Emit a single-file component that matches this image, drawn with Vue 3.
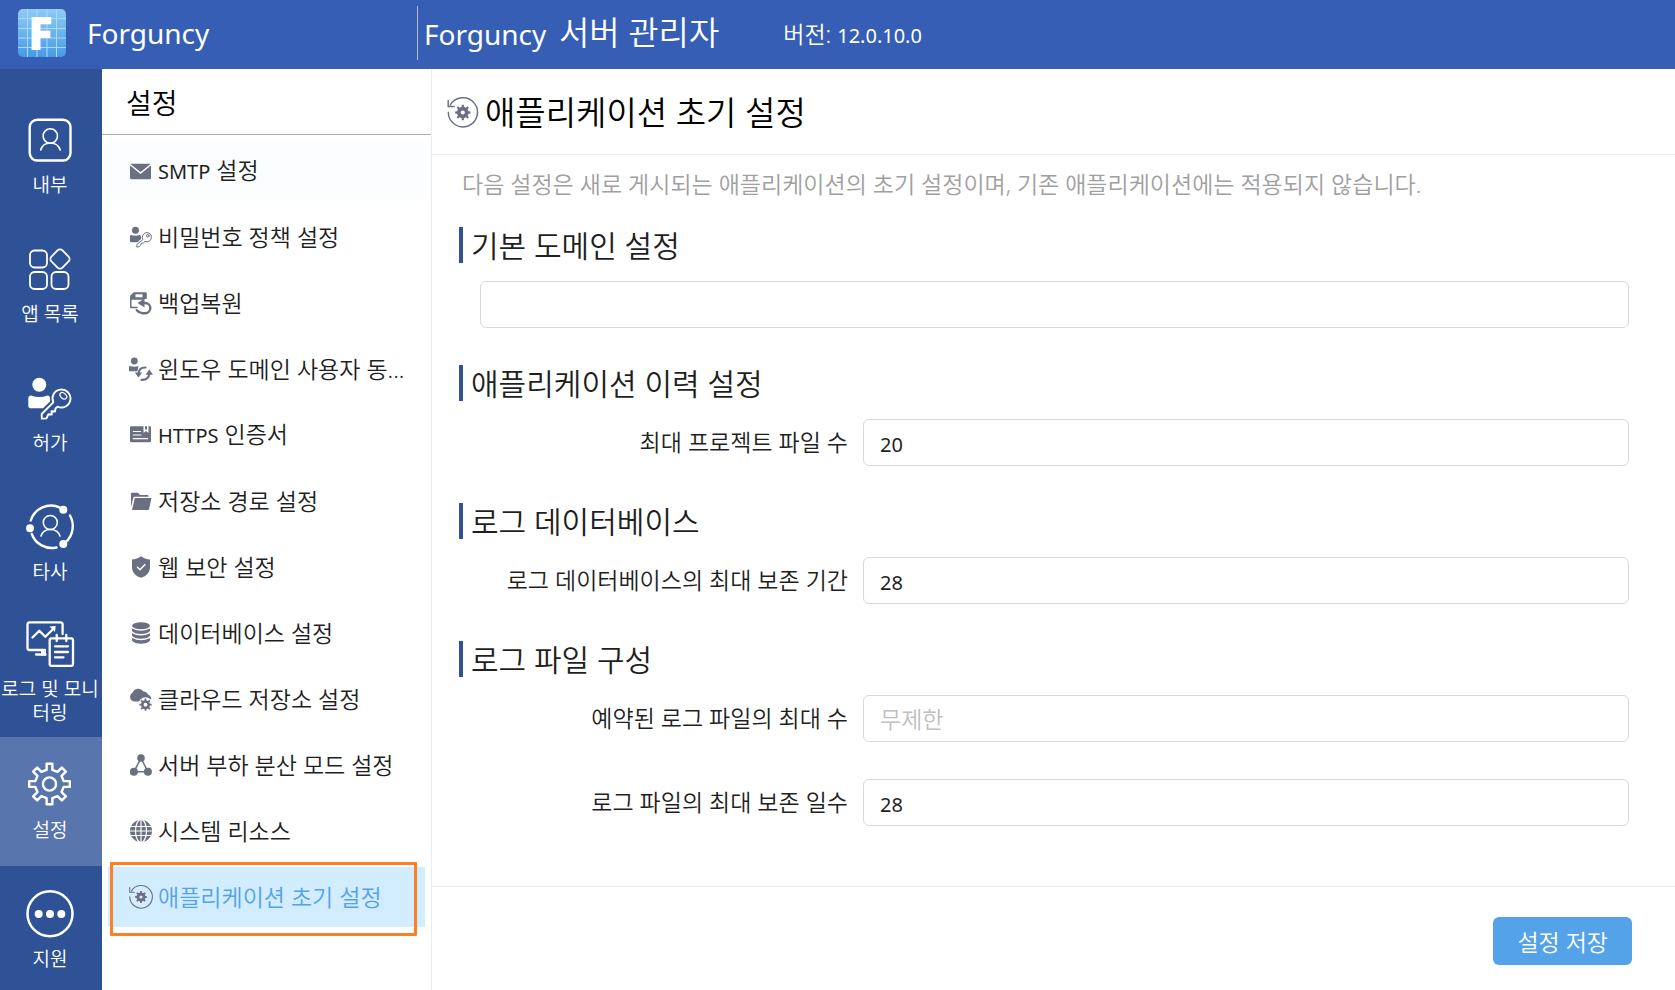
<template>
  <div class="layout">
    <header class="topbar">
      <div class="brand">
        <svg class="brand-logo" viewBox="0 0 48 48" aria-hidden="true">
          <defs>
            <linearGradient id="logoBg" x1="0" y1="0" x2="0" y2="1">
              <stop offset="0" stop-color="#90cbf3" />
              <stop offset="1" stop-color="#479ae8" />
            </linearGradient>
          </defs>
          <rect width="48" height="48" rx="5" fill="url(#logoBg)" />
          <path
            d="M9.5 0V48M19 0V48M29 0V48M38.5 0V48M0 9.5H48M0 19.5H48M0 29H48M0 38.5H48"
            stroke="#a9dcfa"
            stroke-width="1"
          />
          <text x="10" y="41" class="logo-mark">F</text>
        </svg>
        <span class="brand-name">Forguncy</span>
      </div>
      <h1 class="product"><span class="latin">Forguncy</span> 서버 관리자</h1>
      <span class="version">버전: <span class="latin">12.0.10.0</span></span>
    </header>

    <div class="body">
      <!-- Main navigation -->
      <nav class="sidebar">
        <a
          v-for="item in navItems"
          :key="item.label"
          href="#"
          :class="['sidebar-link', { active: activeNav === item.label }]"
          @click.prevent="activeNav = item.label"
        >
          <svg class="sidebar-icon" viewBox="0 0 48 48" aria-hidden="true" v-html="item.icon"></svg>
          <span class="sidebar-label">{{ item.label }}</span>
        </a>
      </nav>

      <!-- Settings menu -->
      <aside class="menu">
        <h2 class="menu-title">설정</h2>
        <ul class="menu-list">
          <li
            v-for="item in menuItems"
            :key="item.label"
            :class="['menu-item', { active: activeMenu === item.label }]"
          >
            <a href="#" class="menu-link" @click.prevent="activeMenu = item.label">
              <svg class="menu-icon" viewBox="0 0 24 24" aria-hidden="true" v-html="item.icon"></svg>
              <span class="menu-label">
                <span v-if="item.latin" class="latin">{{ item.latin }}</span>
                {{ item.label }}
              </span>
            </a>
          </li>
        </ul>
      </aside>

      <main class="content">
        <div class="content-header">
          <svg class="content-icon" viewBox="0 0 24 24" aria-hidden="true" v-html="restoreIcon"></svg>
          <h2 class="content-title">애플리케이션 초기 설정</h2>
        </div>

        <form id="settings" class="form" @submit.prevent>
          <p class="description">
            다음 설정은 새로 게시되는 애플리케이션의 초기 설정이며, 기존 애플리케이션에는 적용되지 않습니다.
          </p>

          <section v-for="section in sections" :key="section.title" class="section">
            <h3 class="section-title">{{ section.title }}</h3>
            <div
              v-for="field in section.fields"
              :key="field.id"
              :class="['field', { wide: !field.label }]"
            >
              <label v-if="field.label" :for="field.id" class="field-label">{{ field.label }}</label>
              <input
                :id="field.id"
                v-model="field.value"
                type="text"
                class="field-input"
                :placeholder="field.placeholder"
                :aria-label="field.label ? null : section.title"
              />
            </div>
          </section>
        </form>

        <footer class="content-footer">
          <button type="submit" form="settings" class="save-button">설정 저장</button>
        </footer>
      </main>
    </div>
  </div>
</template>

<script setup>
import { ref, reactive } from "vue";

// Closed outline of a cog with flat teeth
const gear = (cx, cy, outer, inner, teeth = 8) => {
  const step = (Math.PI * 2) / teeth;
  const points = [];
  for (let i = 0; i < teeth; i++) {
    const a = i * step - Math.PI / 2;
    [
      [inner, -0.25],
      [outer, -0.18],
      [outer, 0.18],
      [inner, 0.25],
    ].forEach(([r, offset]) => {
      const angle = a + offset * step;
      points.push(`${(cx + r * Math.cos(angle)).toFixed(2)} ${(cy + r * Math.sin(angle)).toFixed(2)}`);
    });
  }
  return `M${points.join("L")}Z`;
};

const hole = (cx, cy, r) => `M${cx - r} ${cy}a${r} ${r} 0 1 0 ${r * 2} 0a${r} ${r} 0 1 0 ${-r * 2} 0Z`;

const line = (width, body) =>
  `<g fill="none" stroke="currentColor" stroke-width="${width}" stroke-linecap="round" stroke-linejoin="round">${body}</g>`;
const solid = (body) => `<g fill="currentColor" fill-rule="evenodd">${body}</g>`;

const restoreIcon =
  line(1.1, '<path d="M3.3 6.2A11.3 11.3 0 1 1 1.8 11.8"/><path d="M1.7 2.6V7.3H6.3"/>') +
  solid(`<path d="${gear(13, 12, 6, 4.5)}${hole(13, 12, 1.6)}"/>`);

const navItems = [
  {
    label: "내부",
    icon:
      line(2.4, '<rect x="2.7" y="3.7" width="40.8" height="40.8" rx="7.5"/>') +
      line(1.6, '<circle cx="23.3" cy="20" r="7.2"/><path d="M13.7 34C15 29.5 18.5 27 23.3 27S31.8 29.5 33.2 34"/>'),
  },
  {
    label: "앱 목록",
    icon: line(
      1.8,
      '<rect x="3" y="5.5" width="17" height="17" rx="4.5"/><rect x="3" y="27" width="17" height="17" rx="4.5"/><rect x="24.5" y="27" width="17" height="17" rx="4.5"/><rect x="25.2" y="6.2" width="15.6" height="15.6" rx="3.5" transform="rotate(45 33 14)"/>'
    ),
  },
  {
    label: "허가",
    icon:
      solid(
        '<circle cx="12.3" cy="10.7" r="7"/><path d="M4 21.5c5.5 2 11 2 16.5 0 1.5 0 2.5 1 2.5 2.5v3.5l-7 6.8H3.5c-1.3 0-2.2-.9-2.2-2.2V24c0-1.5 1.2-2.5 2.7-2.5Z"/>'
      ) +
      line(
        1.9,
        '<path d="M26.3 28.3A9 9 0 1 1 30.5 32.6L28.5 34.5 28 37.5 24.5 37.2 24.8 40.5 21.3 40.3 19.5 44.4 14.8 44.6 14.7 40Z"/><ellipse cx="36.3" cy="21.8" rx="3.8" ry="2.6" transform="rotate(42 36.3 21.8)" stroke-width="1.3"/>'
      ),
  },
  {
    label: "타사",
    icon:
      line(
        2.4,
        '<path d="M3.7 17.5A21.3 21.3 0 0 1 33 4.6"/><path d="M43 12.5A21.8 21.8 0 0 1 38.5 39.4"/><path d="M4.8 31A21.3 21.3 0 0 0 29.5 44.5"/>'
      ) +
      line(1.6, '<circle cx="23.3" cy="19.5" r="7"/><path d="M14 33C15.5 28.7 18.7 26.5 23.3 26.5S31.5 28.7 33 33"/>') +
      solid('<circle cx="36.3" cy="6.7" r="4"/><circle cx="3" cy="25.3" r="4"/><circle cx="36.3" cy="41" r="4"/>'),
  },
  {
    label: "로그 및 모니터링",
    icon:
      line(
        2.3,
        '<path d="M18 30H2.7C1.3 30 .5 29.2 .5 28V4.5C.5 3 1.3 2.3 2.7 2.3H33.5C35 2.3 35.6 3 35.6 4.5V14"/><path d="M9 34.5H18.5"/><path d="M5.5 17.5L12.3 10.7 18.3 16.8 26.5 8.7"/><rect x="22.7" y="18.3" width="23.3" height="27.5" rx="1.8"/><path d="M29.7 15V21M39.3 15V21M28 26.3H41M28 32H41M28 37.3H36.5"/>'
      ) + solid('<path d="M22.5 6.5L28.7 6 28 12Z"/><path d="M14 29H19V35.5H14Z"/>'),
  },
  {
    label: "설정",
    icon: line(2.4, `<path d="${gear(22.5, 23, 20.5, 14.5)}"/><circle cx="22.5" cy="23" r="6.6"/>`),
  },
  {
    label: "지원",
    icon:
      line(2.5, '<circle cx="23" cy="23.7" r="22.5"/>') +
      solid('<circle cx="11.7" cy="24" r="4"/><circle cx="23" cy="24" r="4"/><circle cx="34.3" cy="24" r="4"/>'),
  },
];

const menuItems = [
  {
    latin: "SMTP",
    label: "설정",
    icon:
      solid('<rect x="2" y="4.7" width="21" height="15.5" rx="1.5"/>') +
      '<path d="M2 5.5L12.5 14 23 5.5" fill="none" stroke="#fff" stroke-width="1.5"/>',
  },
  {
    label: "비밀번호 정책 설정",
    icon:
      solid('<circle cx="7.5" cy="5.3" r="3.5"/><path d="M3 10C6 11 9 11 12 10L13 11.5V14L9.5 17.2H3Q2 17.2 2 16V11Q2 10 3 10Z"/>') +
      line(
        1,
        '<path d="M14.7 14.2A4.6 4.6 0 1 1 17 16.4L15.3 18 13.5 18.2 12.5 20.5 11 21.8 8.8 22 8.8 20Z"/><circle cx="19.8" cy="10.8" r="1.3"/>'
      ),
  },
  {
    label: "백업복원",
    icon:
      line(1.5, '<path d="M9 16.5H2.8V5L6 2.2H17.8V7"/>') +
      solid('<path d="M5.5 1.5H18.5V8H16L15 8.8H3V4.5ZM7.5 3.3V6.3H14.5V3.3Z"/><path d="M9.5 12L16.5 7.5V16.5Z"/>') +
      line(2.4, '<path d="M15.5 12H17.2A5.1 5.1 0 0 1 17.2 22.2H14.5Q11 22 8.8 19.2"/>'),
  },
  {
    label: "윈도우 도메인 사용자 동...",
    icon:
      solid(
        '<circle cx="6.3" cy="4" r="3.4"/><path d="M2 9C5 10 8 10 10.5 9L9.5 14.3H1V10Q1 9 2 9Z"/><path d="M6.8 15.5L10.5 20.5 14.2 15.5Z"/><path d="M17.5 17.8L21.3 12.5 25 17.8Z"/>'
      ) + line(2.2, '<path d="M10.5 16.5Q11 10.3 17.5 10.5"/><path d="M21.3 17Q20.8 23 13.5 22.8"/>'),
  },
  {
    latin: "HTTPS",
    label: "인증서",
    icon:
      solid('<path d="M3 3.3H15.5V10L18 8 20.5 10V3.3H22Q23 3.3 23 4.3V18Q23 19.2 22 19.2H3Q2 19.2 2 18V4.3Q2 3.3 3 3.3Z"/><path d="M17 3.3H19V7L18 6.2 17 7Z"/>') +
      '<path d="M4.8 8.5H13M4.8 12H13.5M4.8 15.7H20" stroke="#fff" stroke-width="1.2"/>',
  },
  {
    label: "저장소 경로 설정",
    icon: solid(
      '<path d="M3 4.5Q3 3.7 4 3.7H10L12 6H19.5Q20.5 6 20.5 7V7.8H6.5Q5.5 7.8 5.2 9L3 18Z"/><path d="M6.8 9H23.5L21 20.2Q20.8 21 20 21H4Z"/>'
    ),
  },
  {
    label: "웹 보안 설정",
    icon:
      solid('<path d="M13 1.3C15.5 3.2 18.5 4.3 22 4.5V12C22 17.5 18.5 21 13 22.8 7.5 21 4 17.5 4 12V4.5C7.5 4.3 10.5 3.2 13 1.3Z"/>') +
      '<path d="M9 11.8L12 14.7 17.3 9.3" fill="none" stroke="#fff" stroke-width="1.5"/>',
  },
  {
    label: "데이터베이스 설정",
    icon: solid(
      '<ellipse cx="13" cy="4.8" rx="9" ry="3.5"/><path d="M4 7.5Q13 12 22 7.5V10Q19.5 13 13 13T4 10Z"/><path d="M4 12.3Q13 16.8 22 12.3V14.8Q19.5 17.7 13 17.7T4 14.8Z"/><path d="M4 17Q13 21.5 22 17V19.5Q19.5 22.7 13 22.7T4 19.5Z"/>'
    ),
  },
  {
    label: "클라우드 저장소 설정",
    icon:
      solid('<path d="M6 14.5A4.7 4.7 0 0 1 4.5 5.8 6.2 6.2 0 0 1 15.5 4.5 5 5 0 0 1 20 7.5Q23 8.5 23.3 12L20 14.5Z"/>') +
      '<circle cx="17.5" cy="17.5" r="7.2" fill="#fff"/>' +
      solid(`<path d="${gear(17.5, 17.7, 6.2, 4.6)}${hole(17.5, 17.7, 1.9)}"/>`),
  },
  {
    label: "서버 부하 분산 모드 설정",
    icon:
      line(1.5, '<path d="M13 5L6 18.7H19.8Z"/>') +
      solid('<circle cx="13" cy="5" r="3.8"/><circle cx="5.9" cy="18.7" r="4"/><circle cx="19.9" cy="18.7" r="4"/>'),
  },
  {
    label: "시스템 리소스",
    icon:
      solid('<circle cx="13" cy="12" r="11"/>') +
      '<g fill="none" stroke="#fff" stroke-width="1.2"><ellipse cx="13" cy="12" rx="5.5" ry="11.5"/><path d="M13 1V23M2 12H24M3 7.5H23M3 16.5H23"/></g>',
  },
  { label: "애플리케이션 초기 설정", icon: restoreIcon },
];

const activeNav = ref("설정");
const activeMenu = ref("애플리케이션 초기 설정");

const sections = reactive([
  { title: "기본 도메인 설정", fields: [{ id: "domain", value: "" }] },
  {
    title: "애플리케이션 이력 설정",
    fields: [{ id: "max-projects", label: "최대 프로젝트 파일 수", value: "20" }],
  },
  {
    title: "로그 데이터베이스",
    fields: [{ id: "db-retention", label: "로그 데이터베이스의 최대 보존 기간", value: "28" }],
  },
  {
    title: "로그 파일 구성",
    fields: [
      { id: "max-log-files", label: "예약된 로그 파일의 최대 수", value: "", placeholder: "무제한" },
      { id: "log-days", label: "로그 파일의 최대 보존 일수", value: "28" },
    ],
  },
]);
</script>

<style>
body {
  margin: 0;
  background: #fff;
}
</style>

<style scoped>
.layout {
  display: flex;
  flex-direction: column;
  height: 100vh;
  overflow: hidden;
  font-family: "Noto Sans", "Noto Sans CJK KR", sans-serif;
  font-size: 23px;
  font-weight: 350;
  color: #1f1f1f;
}

.layout *,
.layout *::before,
.layout *::after {
  box-sizing: border-box;
}

h1,
h2,
h3,
p,
ul {
  margin: 0;
  padding: 0;
  font-weight: inherit;
}

a {
  color: inherit;
  text-decoration: none;
}

.latin {
  font-size: 20px;
  font-weight: 400;
}

/* Top bar */
.topbar {
  display: flex;
  align-items: center;
  flex-shrink: 0;
  height: 69px;
  padding-bottom: 3px;
  background: #365eb4;
  color: #fff;
}

.brand {
  display: flex;
  align-items: center;
  gap: 21px;
  width: 418px;
  height: 54px;
  padding-left: 18px;
  border-right: 1px solid #b4bccb;
}

.brand-logo {
  width: 48px;
  height: 48px;
  overflow: visible;
}

.logo-mark {
  fill: #fff;
  font-family: "Open Sans", sans-serif;
  font-size: 46px;
  font-weight: 800;
}

.brand-name {
  font-size: 28px;
  font-weight: 400;
}

.product {
  margin-left: 6px;
  font-size: 33px;
  line-height: 48px;
}

.product .latin {
  margin-right: 4px;
  font-size: 28px;
}

.version {
  margin-left: 64px;
}

/* Sidebar */
.body {
  display: flex;
  flex: 1;
  min-height: 0;
}

.sidebar {
  flex: 0 0 102px;
  padding-top: 23px;
  background: #2f5297;
  color: #fff;
}

.sidebar-link {
  display: flex;
  flex-direction: column;
  align-items: center;
  justify-content: center;
  gap: 9px;
  height: 129px;
}

.sidebar-link.active {
  background: #5975ad;
}

.sidebar-icon {
  width: 48px;
  height: 48px;
  flex-shrink: 0;
  overflow: visible;
}

.sidebar-label {
  padding-right: 2px;
  font-size: 19px;
  line-height: 24px;
  text-align: center;
}

/* Settings menu */
.menu {
  flex: 0 0 330px;
  border-right: 1px solid #ececec;
}

.menu-title {
  height: 66px;
  padding-left: 24px;
  border-bottom: 1px solid #a9afb9;
  font-size: 28px;
  line-height: 68px;
  color: #000;
}

.menu-list {
  display: flex;
  flex-direction: column;
  gap: 6px;
  padding: 6px;
  list-style: none;
}

.menu-item {
  position: relative;
}

.menu-item:first-child {
  background: #fcfdff;
}

.menu-item.active {
  background: #d1edff;
  color: #54a3e9;
}

.menu-item.active::after {
  content: "";
  position: absolute;
  inset: -5px 8px -9px 2px;
  border: 3px solid #ff7f27;
  border-radius: 1px;
  pointer-events: none;
}

.menu-link {
  display: flex;
  align-items: center;
  gap: 6px;
  height: 60px;
  padding-left: 20px;
}

.menu-icon {
  width: 24px;
  height: 24px;
  flex-shrink: 0;
  overflow: visible;
  color: #6b6f82;
}

.menu-label {
  line-height: 32px;
  white-space: nowrap;
}

/* Content */
.content {
  display: flex;
  flex: 1;
  flex-direction: column;
  min-width: 0;
}

.content-header {
  display: flex;
  align-items: center;
  gap: 8px;
  height: 86px;
  padding: 2px 0 0 14px;
  border-bottom: 1px solid #ececec;
}

.content-icon {
  width: 31px;
  height: 31px;
  overflow: visible;
  color: #6b6f82;
}

.content-title {
  font-size: 33px;
  line-height: 48px;
  color: #000;
}

.form {
  display: flex;
  flex: 1;
  flex-direction: column;
  gap: 37px;
  padding: 13px 46px 0 27px;
}

.description {
  margin-bottom: -10px;
  padding-left: 3px;
  line-height: 32px;
  color: #a0a0a0;
}

.section-title {
  height: 36px;
  margin-bottom: 18px;
  padding-left: 8px;
  border-left: 4px solid #2f5297;
  font-size: 30px;
  line-height: 38px;
}

.field {
  display: grid;
  grid-template-columns: 1fr 2fr;
  align-items: center;
  padding-left: 21px;
}

.field.wide {
  grid-template-columns: 1fr;
}

.field + .field {
  margin-top: 37px;
}

.field-label {
  padding: 0 15px 2px 0;
  text-align: right;
  line-height: 32px;
  white-space: nowrap;
}

.field-input {
  width: 100%;
  height: 47px;
  padding: 4px 16px 0;
  border: 1px solid #d9d9d9;
  border-radius: 6px;
  background: #fff;
  color: #1f1f1f;
  font-family: inherit;
  font-size: 20px;
  font-weight: 400;
}

.field-input:focus {
  border-color: #54a3e9;
  outline: none;
}

.field-input::placeholder {
  font-size: 23px;
  font-weight: 350;
  color: #bfbfbf;
}

.content-footer {
  display: flex;
  justify-content: flex-end;
  align-items: flex-start;
  height: 104px;
  padding: 30px 43px 0 0;
  border-top: 1px solid #ececec;
}

.save-button {
  height: 48px;
  padding: 0 24px;
  border: none;
  border-radius: 6px;
  background: #54a3e9;
  color: #fff;
  font-family: inherit;
  font-size: 23px;
  font-weight: inherit;
  cursor: pointer;
}

.save-button:hover {
  background: #3f93dd;
}
</style>
